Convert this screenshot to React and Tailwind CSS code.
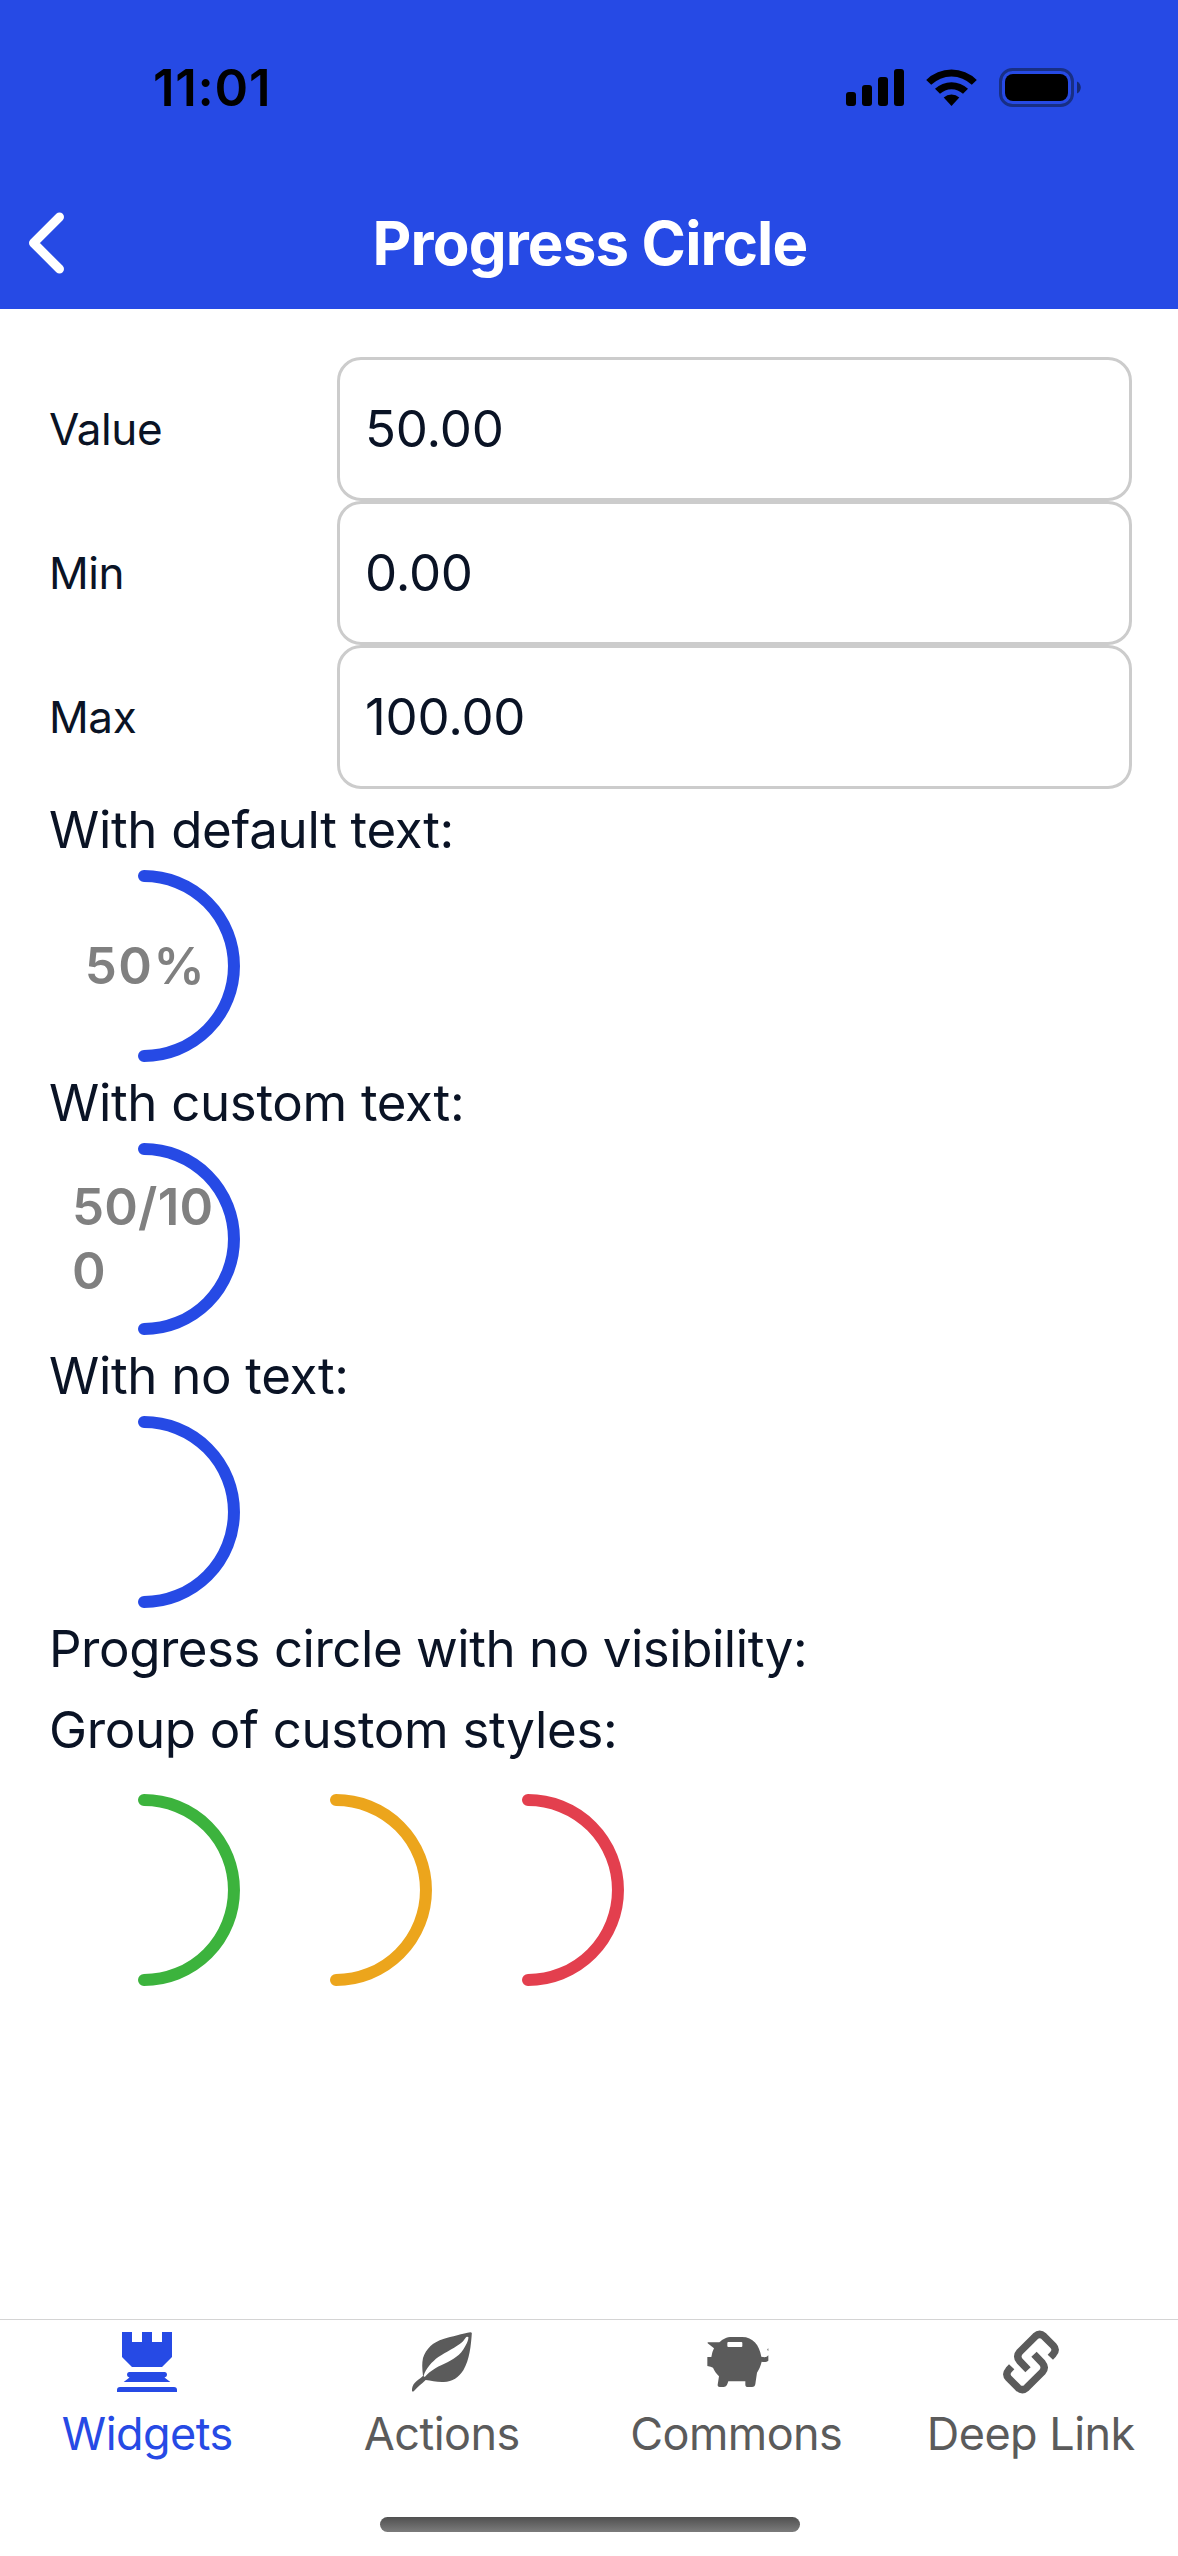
import React from "react";

const PRIMARY = "#264AE5";

function StatusBar() {
  return (
    <div className="flex h-[177px] items-center justify-between pl-[153px] pr-[97px] pb-[2px] text-black">
      <span className="text-[51px] leading-[64px] font-semibold tracking-[0.74px]">11:01</span>
      <svg width="237" height="41" viewBox="0 0 237 41" aria-hidden="true">
        <rect x="2" y="25" width="10" height="14" rx="3" />
        <rect x="18" y="18" width="10" height="21" rx="3" />
        <rect x="34" y="10" width="10" height="29" rx="3" />
        <rect x="50" y="2" width="10" height="37" rx="3" />
        <path d="M82.2 13A36 36 0 0 1 132.8 13L127.800 17.800A29 29 0 0 0 87.200 17.800Z" />
        <path d="M91 21.800A24 24 0 0 1 124 21.800L119 26.800A16.500 16.500 0 0 0 96 26.800Z" />
        <path d="M99.700 30.600A11.500 11.500 0 0 1 115.300 30.600L107.500 39Z" />
        <rect x="156.500" y="2.500" width="72" height="36" rx="12" fill="none" stroke="#0A1325" strokeOpacity="0.5" strokeWidth="3" />
        <rect x="161" y="7" width="63" height="27" rx="8" />
        <path d="M233 14.500C238 16.500 238 24.500 233 26.500Z" fill="#0A1325" fillOpacity="0.6" />
      </svg>
    </div>
  );
}

function Header() {
  return (
    <header className="h-[309px] shrink-0 bg-[#264AE5]">
      <StatusBar />
      <div className="grid h-[132px] grid-cols-[160px_1fr_160px] items-center">
        <svg className="ml-[24px]" width="44" height="66" viewBox="0 0 44 66" aria-label="Back">
          <path d="M35.500 7L9.500 33L35.500 59" fill="none" stroke="white" strokeWidth="9" strokeLinecap="round" strokeLinejoin="round" />
        </svg>
        <h1 className="pl-[2px] text-center text-[60px] leading-[72px] font-bold tracking-[-0.85px] text-white">Progress Circle</h1>
      </div>
    </header>
  );
}

function Field({ label, value }) {
  return (
    <label className="flex h-[144px] items-center">
      <span className="w-[289px] pl-px text-[44px] leading-[56px] tracking-[-0.4px]">{label}</span>
      <span className="flex h-full flex-1 items-center rounded-[24px] border-[3px] border-[#cccccc] pl-[25px] text-[51px] leading-[64px] tracking-[-0.2px]">
        {value}
      </span>
    </label>
  );
}

function Caption({ children }) {
  return <p className="pl-px text-[51px] leading-[81px] tracking-[-0.32px]">{children}</p>;
}

function ProgressCircle({ color = PRIMARY, children }) {
  return (
    <div className="grid size-[192px] place-items-center">
      <svg className="col-start-1 row-start-1" width="192" height="192" viewBox="0 0 192 192">
        <path d="M96 6A90 90 0 0 1 96 186" fill="none" stroke={color} strokeWidth="12" strokeLinecap="round" />
      </svg>
      {children && (
        <div className="col-start-1 row-start-1 flex w-[144px] justify-center text-[51px] leading-[64px] font-semibold text-[#808080]">
          {children}
        </div>
      )}
    </div>
  );
}

function RookIcon() {
  return (
    <svg width="60" height="60" viewBox="0 0 60 60" fill="currentColor">
      <path d="M5 0H15V10H25V0H35V10H45V0H55V25L45 35H15L5 25Z" />
      <path d="M12.500 40H47.500Q50 40 50 43Q50 44.500 47.500 45.500L53.300 50H6.700L12.500 45.500Q10 44.500 10 43Q10 40 12.500 40Z" />
      <path d="M0 60V58Q0 55 3 55H57Q60 55 60 58V60Z" />
    </svg>
  );
}

function LeafIcon() {
  return (
    <svg width="60" height="60" viewBox="96 66 180 180" fill="currentColor" fillRule="evenodd">
      <path d="M275.500 70Q275 67 271 67C250 71 215 80 190 87C160 96 138 116 129 144C125 163 127 181 129 197C125 203 118 206 110 213C101 221 95 229 96 243Q98 246 102 243C112 232 124 222 137 210C154 211 170 217 191 216C218 216 236 202 250 181C269 149 273 106 275.500 70ZM265 81C266 88 262 98 256 108C242 136 219 149 193 161C166 173 153 181 135 200Q132 202 131 197C137 176 156 155 175 141C197 127 230 111 246 97C253 91 256 81 261 80Z" />
    </svg>
  );
}

function PiggyIcon() {
  return (
    <svg className="translate-x-[2px]" width="62" height="60" viewBox="80 66 186 180" fill="currentColor" fillRule="evenodd">
      <path d="M82 97H117C128 87 138 81 155 81H185C218 81 237 105 243 140L252 142Q260 142 264 136V152C261 155 252 157 244 155C241 168 236 178 230 188L225 222Q224 231 215 231H203Q195 231 195 224V214H144L141 222Q138 231 129 231H118Q111 231 112 224L116 199C108 191 102 182 98 173Q92 170 81 168V141H93Q95 126 101 115L82 100ZM144 96Q141 96 141 99V108Q141 111 144 111H183Q186 111 186 108V99Q186 96 183 96Z" />
      <path d="M264 115L261 118Q261 121 264 123Z" />
    </svg>
  );
}

function LinkIcon() {
  return (
    <svg width="60" height="64" viewBox="93 60 180 192" fill="none" stroke="currentColor" strokeWidth="22">
      <path d="M241 141.500L250 132Q261 119 250 107L222 79Q209 67.500 196 79L149 126Q137.500 139 149 153L174 179.500" />
      <path d="M125 170.500L116 180Q105 193 116 205L144 233Q157 244.500 170 233L217 186Q228.500 173 217 159L192 132.500" />
    </svg>
  );
}

const tabs = [
  { name: "Widgets", Icon: RookIcon, active: true },
  { name: "Actions", Icon: LeafIcon },
  { name: "Commons", Icon: PiggyIcon },
  { name: "Deep Link", Icon: LinkIcon },
];

function TabBar() {
  return (
    <nav className="mt-auto flex h-[237px] shrink-0 flex-col items-center border-t border-[#d4d4d4]">
      <div className="grid w-full grid-cols-4">
        {tabs.map(({ name, Icon, active }) => (
          <div key={name} className={`flex flex-col items-center ${active ? "text-[#264AE5]" : "text-[#5b5b5b]"}`}>
            <div className="mt-[8px] flex h-[68px] items-center">
              <Icon />
            </div>
            <span className="mt-[10px] text-[45px] leading-[56px] tracking-[-0.55px]">{name}</span>
          </div>
        ))}
      </div>
      <div className="mt-auto mb-[24px] ml-[2px] h-[15px] w-[420px] rounded-full bg-linear-to-b from-[#505050] to-[#7c7c7c]" />
    </nav>
  );
}

export default function App() {
  return (
    <div className="flex h-[2556px] w-[1178px] flex-col overflow-hidden bg-white font-['Inter','Liberation_Sans',sans-serif] text-[#0A1325]">
      <Header />
      <main className="pt-[48px] pr-[46px] pl-[48px]">
        <Field label="Value" value="50.00" />
        <Field label="Min" value="0.00" />
        <Field label="Max" value="100.00" />
        <Caption>With default text:</Caption>
        <ProgressCircle>
          <span className="ml-[3px] tracking-[1.5px]">50%</span>
        </ProgressCircle>
        <Caption>With custom text:</Caption>
        <ProgressCircle>
          <span className="w-full tracking-[0.2px] break-all">50/100</span>
        </ProgressCircle>
        <Caption>With no text:</Caption>
        <ProgressCircle />
        <Caption>
          <span className="tracking-[-0.46px]">Progress circle with no visibility:</span>
        </Caption>
        <Caption>Group of custom styles:</Caption>
        <div className="flex pt-[24px]">
          <ProgressCircle color="#3CB33D" />
          <ProgressCircle color="#ECA51C" />
          <ProgressCircle color="#E33F4E" />
        </div>
      </main>
      <TabBar />
    </div>
  );
}
